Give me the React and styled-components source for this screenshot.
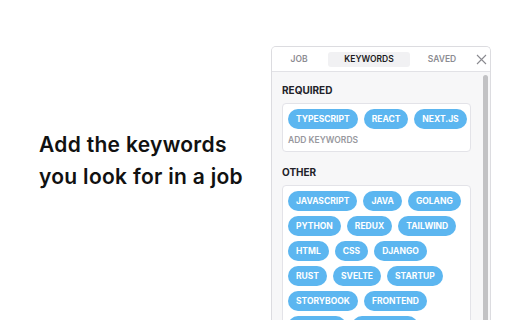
import React from "react";
import styled, { createGlobalStyle } from "styled-components";

const GlobalStyle = createGlobalStyle`
  html, body {
    margin: 0;
    padding: 0;
    background: #ffffff;
  }
  body {
    font-family: "Inter", "Liberation Sans", sans-serif;
  }
`;

const required = ["TypeScript", "React", "Next.js"];
const other = [
  "JavaScript", "Java", "Golang", "Python", "Redux", "Tailwind",
  "HTML", "CSS", "Django", "Rust", "Svelte", "Startup",
  "Storybook", "Frontend", "Backend", "Fullstack",
];

const App = () => (
  <>
    <GlobalStyle />
    <Page>
      <Intro>
        <Headline>
          Add the keywords
          <br />
          you look for in a job
        </Headline>
      </Intro>
      <Panel>
        <Header>
          <Tab $w="54px">Job</Tab>
          <Tab $w="82px" $active>Keywords</Tab>
          <Tab $w="60px">Saved</Tab>
          <Close aria-label="close">
            <svg width="11" height="11" viewBox="0 0 11 11">
              <path d="M1 1L10 10M10 1L1 10" stroke="#8a8a90" strokeWidth="1.1" />
            </svg>
          </Close>
        </Header>
        <Body>
          <Main>
            <Label>Required</Label>
            <Box>
              <Chips>
                {required.map((k) => (
                  <Chip key={k}>{k}</Chip>
                ))}
              </Chips>
              <AddLink>Add keywords</AddLink>
            </Box>
            <Label $gap>Other</Label>
            <Box>
              <Chips>
                {other.map((k) => (
                  <Chip key={k}>{k}</Chip>
                ))}
              </Chips>
            </Box>
          </Main>
          <Track>
            <Thumb />
          </Track>
        </Body>
      </Panel>
    </Page>
  </>
);

const Page = styled.div`
  display: flex;
  width: 512px;
  height: 320px;
  overflow: hidden;
`;

const Intro = styled.div`
  width: 271px;
  padding-left: 39px;
  box-sizing: border-box;
  display: flex;
  align-items: center;
  padding-top: 2px;
`;

const Headline = styled.h1`
  margin: 0;
  font-family: "Inter", sans-serif;
  font-size: 21px;
  font-weight: 600;
  line-height: 32px;
  color: #111;
  letter-spacing: 0.3px;
`;

const Panel = styled.div`
  margin-top: 46px;
  width: 220px;
  height: 290px;
  box-sizing: border-box;
  border: 1px solid #dcdce0;
  border-bottom: none;
  border-radius: 5px 5px 0 0;
  display: flex;
  flex-direction: column;
  overflow: hidden;
  background: #f7f7f8;
`;

const Header = styled.div`
  flex-shrink: 0;
  display: flex;
  align-items: center;
  height: 24px;
  padding: 0 2px 0 0;
  background: #fff;
  border-bottom: 1px solid #e2e2e6;
  gap: 2px;
`;

const Tab = styled.div`
  flex: 0 0 ${(p) => p.$w};
  height: 15px;
  display: flex;
  align-items: center;
  justify-content: center;
  border-radius: 3px;
  font-size: 8.5px;
  font-weight: 600;
  text-transform: uppercase;
  color: ${(p) => (p.$active ? "#1c1c22" : "#8c8c92")};
  background: ${(p) => (p.$active ? "#f1f1f3" : "transparent")};
`;

const Close = styled.div`
  flex: 1;
  display: flex;
  align-items: center;
  justify-content: center;
`;

const Body = styled.div`
  flex: 1;
  display: flex;
`;

const Main = styled.div`
  flex: 1;
  padding: 12px 9px 0 10px;
`;

const Label = styled.div`
  font-size: 10px;
  font-weight: 700;
  color: #222228;
  text-transform: uppercase;
  margin-top: ${(p) => (p.$gap ? "14px" : "0")};
  margin-bottom: 7px;
  line-height: 12px;
`;

const Box = styled.div`
  background: #fff;
  border: 1px solid #e3e3e8;
  border-radius: 4px;
  padding: 5px 2px 5px 5px;
`;

const Chips = styled.div`
  display: flex;
  flex-wrap: wrap;
  gap: 5px 6px;
`;

const Chip = styled.span`
  height: 20px;
  padding: 0 8px;
  border-radius: 10px;
  background: #5cb6f0;
  color: #fff;
  font-size: 8.5px;
  font-weight: 700;
  text-transform: uppercase;
  display: inline-flex;
  align-items: center;
`;

const AddLink = styled.div`
  margin-top: 6px;
  font-size: 8.5px;
  line-height: 11px;
  font-weight: 600;
  color: #98989e;
  text-transform: uppercase;
`;

const Track = styled.div`
  width: 10px;
  padding-top: 3px;
  display: flex;
  justify-content: center;
  background: #f7f7f8;
`;

const Thumb = styled.div`
  width: 5px;
  height: 260px;
  border-radius: 3px;
  background: #c2c2c4;
`;

export default App;
